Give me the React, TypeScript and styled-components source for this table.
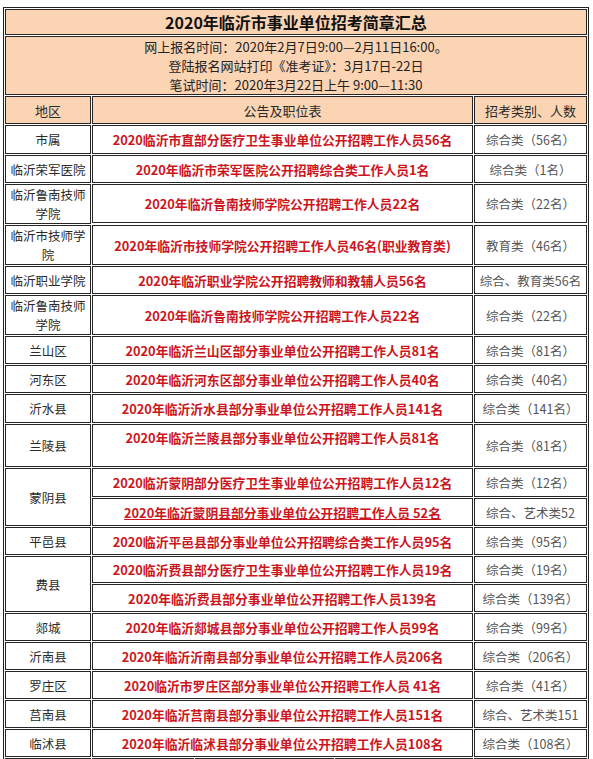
import { Fragment } from "react";
import styled, { createGlobalStyle } from "styled-components";

const GlobalStyle = createGlobalStyle`
  body {
    margin: 0;
    background: #fff;
    font-family: "Noto Sans CJK SC", "Noto Sans", sans-serif;
  }
`;

const Page = styled.div`
  padding: 7px 0 0 3px;
`;

const Sheet = styled.div`
  display: grid;
  grid-template-columns: 86px 381px 113px;
  gap: 1px;
  padding: 1px;
  border: 1px solid #222;
  width: max-content;
  background: #fff;
`;

const Cell = styled.div<{ $h?: number; $rows?: number; $top?: boolean }>`
  box-sizing: border-box;
  border: 1px solid #262626;
  display: flex;
  align-items: ${(p) => (p.$top ? "flex-start" : "center")};
  justify-content: center;
  text-align: center;
  height: ${(p) => (p.$h ? `${p.$h}px` : "auto")};
  grid-row: ${(p) => (p.$rows ? `span ${p.$rows}` : "auto")};
  padding-top: ${(p) => (p.$top ? "3px" : "0")};
  overflow: hidden;
`;

const Banner = styled(Cell)`
  grid-column: 1 / -1;
  background: #fbd4b4;
  flex-direction: column;
`;

const Title = styled.div`
  font-size: 16px;
  font-weight: 700;
  color: #111;
  line-height: 20px;
`;

const Info = styled.div`
  font-size: 13px;
  color: #222;
  line-height: 19px;
`;

const Head = styled(Cell)`
  background: #fbd4b4;
  font-size: 13px;
  color: #2a2a2a;
`;

const Area = styled(Cell)`
  font-size: 12.5px;
  line-height: 19px;
  color: #2a2a2a;
`;

const Notice = styled(Cell)<{ $line?: boolean }>`
  font-size: 12.8px;
  font-weight: 700;
  line-height: 19px;
  color: #cc161d;
  text-decoration: ${(p) => (p.$line ? "underline" : "none")};
  white-space: nowrap;
`;

const Kind = styled(Cell)`
  font-size: 12.5px;
  color: #555;
  white-space: nowrap;
`;

const Split = styled.div`
  display: grid;
  grid-template-columns: 102px 139px 138px;
  gap: 1px;
`;

type Entry = { title: string; kind: string; h: number; line?: boolean; top?: boolean };
type Group = { area: string; items: Entry[] };

const groups: Group[] = [
  { area: "市属", items: [{ title: "2020临沂市直部分医疗卫生事业单位公开招聘工作人员56名", kind: "综合类（56名）", h: 29 }] },
  { area: "临沂荣军医院", items: [{ title: "2020年临沂市荣军医院公开招聘综合类工作人员1名", kind: "综合类（1名）", h: 28 }] },
  { area: "临沂鲁南技师学院", items: [{ title: "2020年临沂鲁南技师学院公开招聘工作人员22名", kind: "综合类（22名）", h: 39 }] },
  { area: "临沂市技师学院", items: [{ title: "2020年临沂市技师学院公开招聘工作人员46名(职业教育类)", kind: "教育类（46名）", h: 40 }] },
  { area: "临沂职业学院", items: [{ title: "2020年临沂职业学院公开招聘教师和教辅人员56名", kind: "综合、教育类56名", h: 28 }] },
  { area: "临沂鲁南技师学院", items: [{ title: "2020年临沂鲁南技师学院公开招聘工作人员22名", kind: "综合类（22名）", h: 40 }] },
  { area: "兰山区", items: [{ title: "2020年临沂兰山区部分事业单位公开招聘工作人员81名", kind: "综合类（81名）", h: 28 }] },
  { area: "河东区", items: [{ title: "2020年临沂河东区部分事业单位公开招聘工作人员40名", kind: "综合类（40名）", h: 28 }] },
  { area: "沂水县", items: [{ title: "2020年临沂沂水县部分事业单位公开招聘工作人员141名", kind: "综合类（141名）", h: 29 }] },
  { area: "兰陵县", items: [{ title: "2020年临沂兰陵县部分事业单位公开招聘工作人员81名", kind: "综合类（81名）", h: 43, top: true }] },
  {
    area: "蒙阴县",
    items: [
      { title: "2020临沂蒙阴部分医疗卫生事业单位公开招聘工作人员12名", kind: "综合类（12名）", h: 29 },
      { title: "2020年临沂蒙阴县部分事业单位公开招聘工作人员 52名", kind: "综合、艺术类52", h: 28, line: true },
    ],
  },
  { area: "平邑县", items: [{ title: "2020临沂平邑县部分事业单位公开招聘综合类工作人员95名", kind: "综合类（95名）", h: 28 }] },
  {
    area: "费县",
    items: [
      { title: "2020临沂费县部分医疗卫生事业单位公开招聘工作人员19名", kind: "综合类（19名）", h: 27 },
      { title: "2020年临沂费县部分事业单位公开招聘工作人员139名", kind: "综合类（139名）", h: 28 },
    ],
  },
  { area: "郯城", items: [{ title: "2020年临沂郯城县部分事业单位公开招聘工作人员99名", kind: "综合类（99名）", h: 28 }] },
  { area: "沂南县", items: [{ title: "2020年临沂沂南县部分事业单位公开招聘工作人员206名", kind: "综合类（206名）", h: 28 }] },
  { area: "罗庄区", items: [{ title: "2020临沂市罗庄区部分事业单位公开招聘工作人员 41名", kind: "综合类（41名）", h: 28 }] },
  { area: "莒南县", items: [{ title: "2020年临沂莒南县部分事业单位公开招聘工作人员151名", kind: "综合、艺术类151", h: 28 }] },
  { area: "临沭县", items: [{ title: "2020年临沂临沭县部分事业单位公开招聘工作人员108名", kind: "综合类（108名）", h: 28 }] },
];

export default function App() {
  return (
    <Page>
      <GlobalStyle />
      <Sheet>
        <Banner $h={26}>
          <Title>2020年临沂市事业单位招考简章汇总</Title>
        </Banner>
        <Banner $h={59}>
          <Info>网上报名时间：2020年2月7日9:00—2月11日16:00。</Info>
          <Info>登陆报名网站打印《准考证》：3月17日-22日</Info>
          <Info>笔试时间：2020年3月22日上午 9:00—11:30</Info>
        </Banner>
        <Head $h={28}>地区</Head>
        <Head $h={28}>公告及职位表</Head>
        <Head $h={28}>招考类别、人数</Head>
        {groups.map((g, gi) =>
          g.items.map((it, i) => (
            <Fragment key={`${gi}-${i}`}>
              {i === 0 && (
                <Area $rows={g.items.length > 1 ? g.items.length : undefined}>{g.area}</Area>
              )}
              <Notice $h={it.h} $top={it.top} $line={it.line}>
                {it.title}
              </Notice>
              <Kind $h={it.h}>{it.kind}</Kind>
            </Fragment>
          ))
        )}
        <Area $h={28} />
        <Split>
          <Cell $h={28} />
          <Cell $h={28} />
          <Cell $h={28} />
        </Split>
        <Kind $h={28} />
      </Sheet>
    </Page>
  );
}
